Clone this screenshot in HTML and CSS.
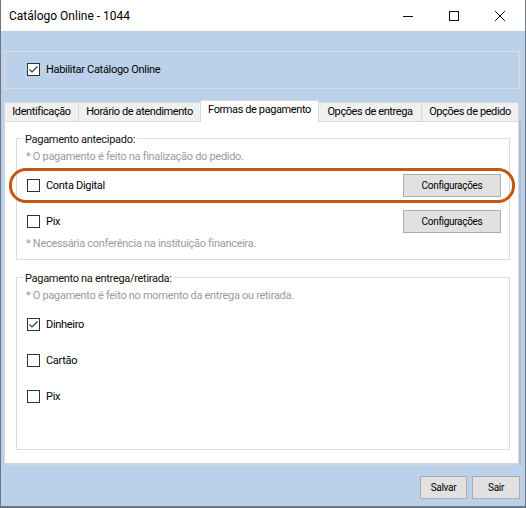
FILE: index.html
```html
<!DOCTYPE html>
<html lang="pt-BR">
<head>
<meta charset="utf-8">
<title>Catálogo Online - 1044</title>
<link rel="stylesheet" href="styles.css">
</head>
<body>
<div class="window">
  <div class="titlebar">
    <span class="title">Catálogo Online - 1044</span>
    <div class="controls">
      <span class="ctl"><svg width="10" height="10" viewBox="0 0 10 10"><line x1="0" y1="5.5" x2="10" y2="5.5"/></svg></span>
      <span class="ctl"><svg width="10" height="10" viewBox="0 0 10 10"><rect x="0.5" y="0.5" width="9" height="9"/></svg></span>
      <span class="ctl"><svg width="10" height="10" viewBox="0 0 10 10"><line x1="0" y1="0" x2="10" y2="10"/><line x1="10" y1="0" x2="0" y2="10"/></svg></span>
    </div>
  </div>
  <div class="client">
    <div class="enable-box">
      <div class="check">
        <span class="box"><svg width="11" height="11" viewBox="0 0 11 11"><polyline points="1.5,5.5 4,8 9.5,2.5"/></svg></span>
        <span class="check-label">Habilitar Catálogo Online</span>
      </div>
    </div>
    <div class="tab-strip">
      <div class="tab t1">Identificação</div>
      <div class="tab t2">Horário de atendimento</div>
      <div class="tab selected">Formas de pagamento</div>
      <div class="tab t4">Opções de entrega</div>
      <div class="tab t5">Opções de pedido</div>
    </div>
    <div class="panel">
      <fieldset class="group group-a">
        <legend>Pagamento antecipado:</legend>
        <p class="hint hint-a">* O pagamento é feito na finalização do pedido.</p>
        <div class="row row-first highlighted">
          <div class="check">
            <span class="box"></span>
            <span class="check-label">Conta Digital</span>
          </div>
          <button class="btn config">Configurações</button>
        </div>
        <div class="row">
          <div class="check">
            <span class="box"></span>
            <span class="check-label">Pix</span>
          </div>
          <button class="btn config">Configurações</button>
        </div>
        <p class="hint hint-end">* Necessária conferência na instituição financeira.</p>
      </fieldset>
      <fieldset class="group group-b">
        <legend>Pagamento na entrega/retirada:</legend>
        <p class="hint hint-b">* O pagamento é feito no momento da entrega ou retirada.</p>
        <div class="row row-first-b">
          <div class="check">
            <span class="box"><svg width="11" height="11" viewBox="0 0 11 11"><polyline points="1.5,5.5 4,8 9.5,2.5"/></svg></span>
            <span class="check-label">Dinheiro</span>
          </div>
        </div>
        <div class="row">
          <div class="check">
            <span class="box"></span>
            <span class="check-label">Cartão</span>
          </div>
        </div>
        <div class="row">
          <div class="check">
            <span class="box"></span>
            <span class="check-label">Pix</span>
          </div>
        </div>
      </fieldset>
    </div>
    <div class="footer">
      <button class="btn save">Salvar</button>
      <button class="btn exit">Sair</button>
    </div>
  </div>
</div>
</body>
</html>
```
FILE: styles.css
```css
* { box-sizing: border-box; }

html, body {
  margin: 0;
  padding: 0;
  background: #ffffff;
}

body {
  font-family: Roboto, "Liberation Sans", sans-serif;
  font-size: 11px;
  color: #000;
}

.window {
  width: 526px;
  height: 508px;
  border-left: 1px solid #6c7684;
  border-right: 1px solid #6c7684;
  border-bottom: 2px solid #6f7680;
  display: flex;
  flex-direction: column;
  overflow: hidden;
}

.titlebar {
  height: 31px;
  flex: 0 0 31px;
  background: #ffffff;
  display: flex;
  align-items: center;
  padding-left: 8px;
  padding-right: 2px;
}

.title {
  font-size: 12px;
  line-height: 14px;
  color: #000;
  flex: 1;
}

.controls {
  display: flex;
  height: 31px;
}

.ctl {
  width: 46px;
  height: 31px;
  display: flex;
  align-items: center;
  justify-content: center;
}

.ctl svg {
  display: block;
  fill: none;
  stroke: #111;
  stroke-width: 1;
}

.client {
  flex: 1;
  background: #bbd1ea;
  padding-left: 3px;
  display: flex;
  flex-direction: column;
}

.enable-box {
  margin-top: 20px;
  width: 516px;
  height: 38px;
  border: 1px solid #d9dde2;
  display: flex;
  align-items: center;
  padding-left: 22px;
  padding-bottom: 1px;
}

.check {
  display: flex;
  align-items: center;
}

.box {
  width: 13px;
  height: 13px;
  flex: 0 0 13px;
  border: 1px solid #333;
  background: #fff;
  display: flex;
  align-items: center;
  justify-content: center;
}

.box svg {
  display: block;
  fill: none;
  stroke: #333;
  stroke-width: 1.1;
}

.check-label {
  margin-left: 6px;
  letter-spacing: -0.3px;
  line-height: 14px;
  white-space: nowrap;
}

/* Tabs */
.tab-strip {
  margin-top: 11px;
  height: 21px;
  display: flex;
  align-items: flex-end;
}

.tab {
  height: 19px;
  background: #f0f0f0;
  border-top: 1px solid #d9d9d9;
  border-left: 1px solid #d9d9d9;
  text-align: center;
  line-height: 17px;
  letter-spacing: -0.4px;
  white-space: nowrap;
}

.t1 { width: 74px; }
.t2 { width: 122px; }
.t4 { width: 102px; border-left: none; }
.t5 { width: 98px; border-right: 1px solid #d9d9d9; }

.tab.selected {
  width: 119px;
  height: 22px;
  margin-bottom: -1px;
  background: #ffffff;
  border-right: 1px solid #d9d9d9;
  position: relative;
  z-index: 1;
}

.panel {
  width: 515px;
  height: 344px;
  background: #ffffff;
  border: 1px solid #d9d9d9;
  border-bottom: 2px solid #d4d4d4;
  padding: 6px 0 0 11px;
  position: relative;
  box-shadow: 2px 0 0 #aebfd3;
}

.group {
  margin: 0;
  padding: 0 0 8px 0;
  width: 494px;
  min-width: 0;
  border: 1px solid #dcdcdc;
  display: flex;
  flex-direction: column;
}

.group legend {
  margin-left: 6px;
  padding: 4px 2px 0;
  line-height: 16px;
  letter-spacing: -0.3px;
  color: #111;
}

.group-b {
  margin-top: 7px;
  padding-bottom: 41px;
}

.hint {
  margin: 0;
  padding-left: 9px;
  line-height: 14px;
  color: #9b9b9b;
  letter-spacing: -0.3px;
  white-space: nowrap;
}

.hint-a { margin-top: 2px; }
.hint-end { margin-top: 4px; }
.hint-b { margin-top: 2px; }

.row {
  height: 23px;
  margin-top: 13px;
  padding-left: 10px;
  padding-right: 8px;
  display: flex;
  align-items: center;
  justify-content: space-between;
  position: relative;
}

.row-first { margin-top: 10px; }
.row-first-b { margin-top: 10px; }

.highlighted::after {
  content: "";
  position: absolute;
  left: -8px;
  right: -6px;
  top: -6px;
  bottom: -6px;
  border: 3px solid #c4560f;
  border-radius: 17px;
  pointer-events: none;
}

.btn {
  font-family: Roboto, "Liberation Sans", sans-serif;
  font-size: 10px;
  letter-spacing: -0.3px;
  color: #000;
  background: #e1e1e1;
  border: 1px solid #adadad;
  height: 23px;
  padding: 0;
  margin: 0;
  line-height: 21px;
}

.config { width: 98px; }

.footer {
  margin-top: 11px;
  display: flex;
  justify-content: flex-end;
  gap: 5px;
  padding-right: 5px;
}

.save { width: 47px; }
.exit { width: 48px; }
```
